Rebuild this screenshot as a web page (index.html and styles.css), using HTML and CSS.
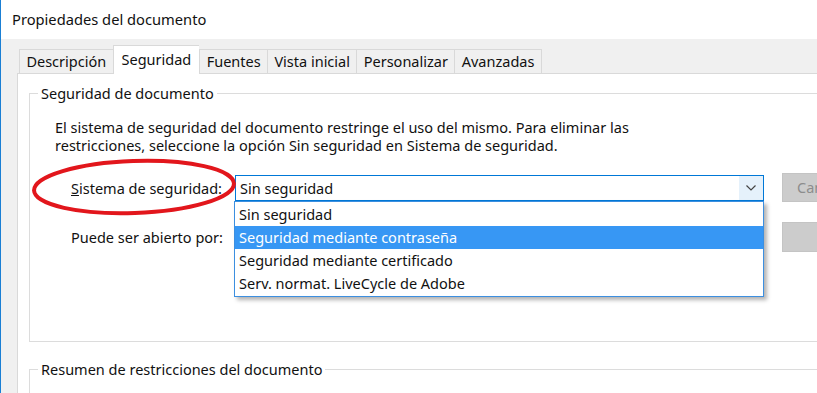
FILE: index.html
```html
<!DOCTYPE html>
<html lang="es">
<head>
<meta charset="utf-8">
<title>Propiedades del documento</title>
<link rel="stylesheet" href="styles.css">
</head>
<body>
<div class="window">
  <div class="titlebar">Propiedades del documento</div>
  <div class="client">
    <div class="tabs">
      <div class="tab">Descripción</div>
      <div class="tab active">Seguridad</div>
      <div class="tab">Fuentes</div>
      <div class="tab">Vista inicial</div>
      <div class="tab">Personalizar</div>
      <div class="tab">Avanzadas</div>
    </div>
    <div class="panel">
      <fieldset class="group first">
        <legend>Seguridad de documento</legend>
        <p class="info">El sistema de seguridad del documento restringe el uso del mismo. Para eliminar las<br>restricciones, seleccione la opción Sin seguridad en Sistema de seguridad.</p>
        <div class="row">
          <span class="label"><u>S</u>istema de seguridad:</span>
          <div class="select-wrap">
            <div class="select">
              <span class="value">Sin seguridad</span>
              <span class="arrow"><svg width="10" height="6" viewBox="0 0 10 6"><path d="M0.5 0.5 L5 5 L9.5 0.5" fill="none" stroke="#444" stroke-width="1.2"/></svg></span>
            </div>
            <ul class="dropdown">
              <li>Sin seguridad</li>
              <li class="hl">Seguridad mediante contraseña</li>
              <li>Seguridad mediante certificado</li>
              <li>Serv. normat. LiveCycle de Adobe</li>
            </ul>
          </div>
          <div class="btn">Cambiar configuración...</div>
        </div>
        <div class="row second">
          <span class="label">Puede ser abierto por:</span>
          <div class="select-wrap blank"></div>
          <div class="btn"></div>
        </div>
      </fieldset>
      <fieldset class="group">
        <legend>Resumen de restricciones del documento</legend>
      </fieldset>
    </div>
  </div>
  <svg class="circle" width="220" height="70" viewBox="0 0 220 70">
    <ellipse cx="102" cy="29" rx="100" ry="26" fill="none" stroke="#e2161c" stroke-width="4" transform="rotate(-2 102 29)"/>
  </svg>
</div>
</body>
</html>
```

FILE: styles.css
```css
html, body {
  margin: 0;
  padding: 0;
}
body {
  width: 817px;
  height: 393px;
  overflow: hidden;
  background: #ffffff;
  font-family: "Noto Sans", "Open Sans", sans-serif;
  font-size: 14.5px;
  color: #111;
}
.window {
  position: relative;
  height: 393px;
  border-left: 1px solid #1a7fd4;
  display: flex;
  flex-direction: column;
}
.titlebar {
  height: 39px;
  line-height: 38px;
  padding-left: 11px;
  font-size: 14.7px;
  background: #fff;
  flex: none;
}
.client {
  flex: 1;
  background: #f0f0f0;
  padding: 6px 0 0 16px;
  display: flex;
  flex-direction: column;
  overflow: hidden;
}
.tabs {
  display: flex;
  align-items: flex-end;
  height: 29px;
  padding-left: 2px;
  position: relative;
  z-index: 2;
}
.tab {
  height: 24px;
  line-height: 23px;
  padding: 0 6.4px;
  border: 1px solid #d9d9d9;
  border-bottom: none;
  border-right: none;
  background: #f0f0f0;
  box-sizing: border-box;
  white-space: nowrap;
}
.tab:last-child {
  border-right: 1px solid #d9d9d9;
}
.tab.active {
  height: 29px;
  line-height: 26px;
  background: #fff;
  margin: 0 0 -1px 0;
  padding: 0 8px;
}
.tab.active + .tab {
  border-left: 1px solid #d9d9d9;
}
.panel {
  flex: 1;
  background: #fff;
  border-left: 1px solid #d9d9d9;
  border-top: 1px solid #d9d9d9;
  padding: 9px 0 0 11px;
  width: 900px;
}
.group {
  margin: 0;
  padding: 0;
  border: 1px solid #dcdcdc;
  width: 860px;
}
.group legend {
  margin-left: 8px;
  padding: 0 3px;
  line-height: 20px;
}
.group.first {
  height: 259px;
  box-sizing: border-box;
}
.group + .group {
  margin-top: 17px;
  height: 60px;
}
.info {
  margin: 15px 0 0 25px;
  line-height: 18px;
}
.row {
  display: flex;
  align-items: center;
  margin-top: 19px;
  height: 29px;
}
.row.second {
  margin-top: 20px;
  height: 30px;
}
.label {
  width: 164px;
  margin-left: 41px;
  flex: none;
}
.select-wrap {
  position: relative;
  width: 529px;
  height: 26px;
  flex: none;
}
.select {
  height: 26px;
  box-sizing: border-box;
  border: 1px solid #0078d7;
  background: #fff;
  display: flex;
  align-items: center;
  justify-content: space-between;
}
.select .value {
  padding-left: 4px;
}
.arrow {
  width: 24px;
  height: 24px;
  background: #e5f1fb;
  display: flex;
  align-items: center;
  justify-content: center;
}
.dropdown {
  position: absolute;
  left: -1px;
  top: 26px;
  width: 530px;
  margin: 0;
  padding: 1px 0;
  list-style: none;
  background: #fff;
  border: 1px solid #3c8fe0;
  box-sizing: border-box;
  box-shadow: 3px 3px 4px rgba(0, 0, 0, 0.3);
  z-index: 5;
}
.dropdown li {
  height: 23px;
  line-height: 23px;
  padding-left: 4px;
  white-space: nowrap;
}
.dropdown li.hl {
  background: #3797f4;
  color: #fff;
}
.btn {
  margin-left: 18px;
  width: 120px;
  height: 29px;
  box-sizing: border-box;
  background: #cccccc;
  border: 1px solid #c4c4c4;
  color: #8c8c8c;
  line-height: 27px;
  padding-left: 14px;
  white-space: nowrap;
  overflow: hidden;
  flex: none;
}
.row.second .btn {
  height: 30px;
}
.circle {
  position: absolute;
  left: 31px;
  top: 158px;
  pointer-events: none;
}
```
